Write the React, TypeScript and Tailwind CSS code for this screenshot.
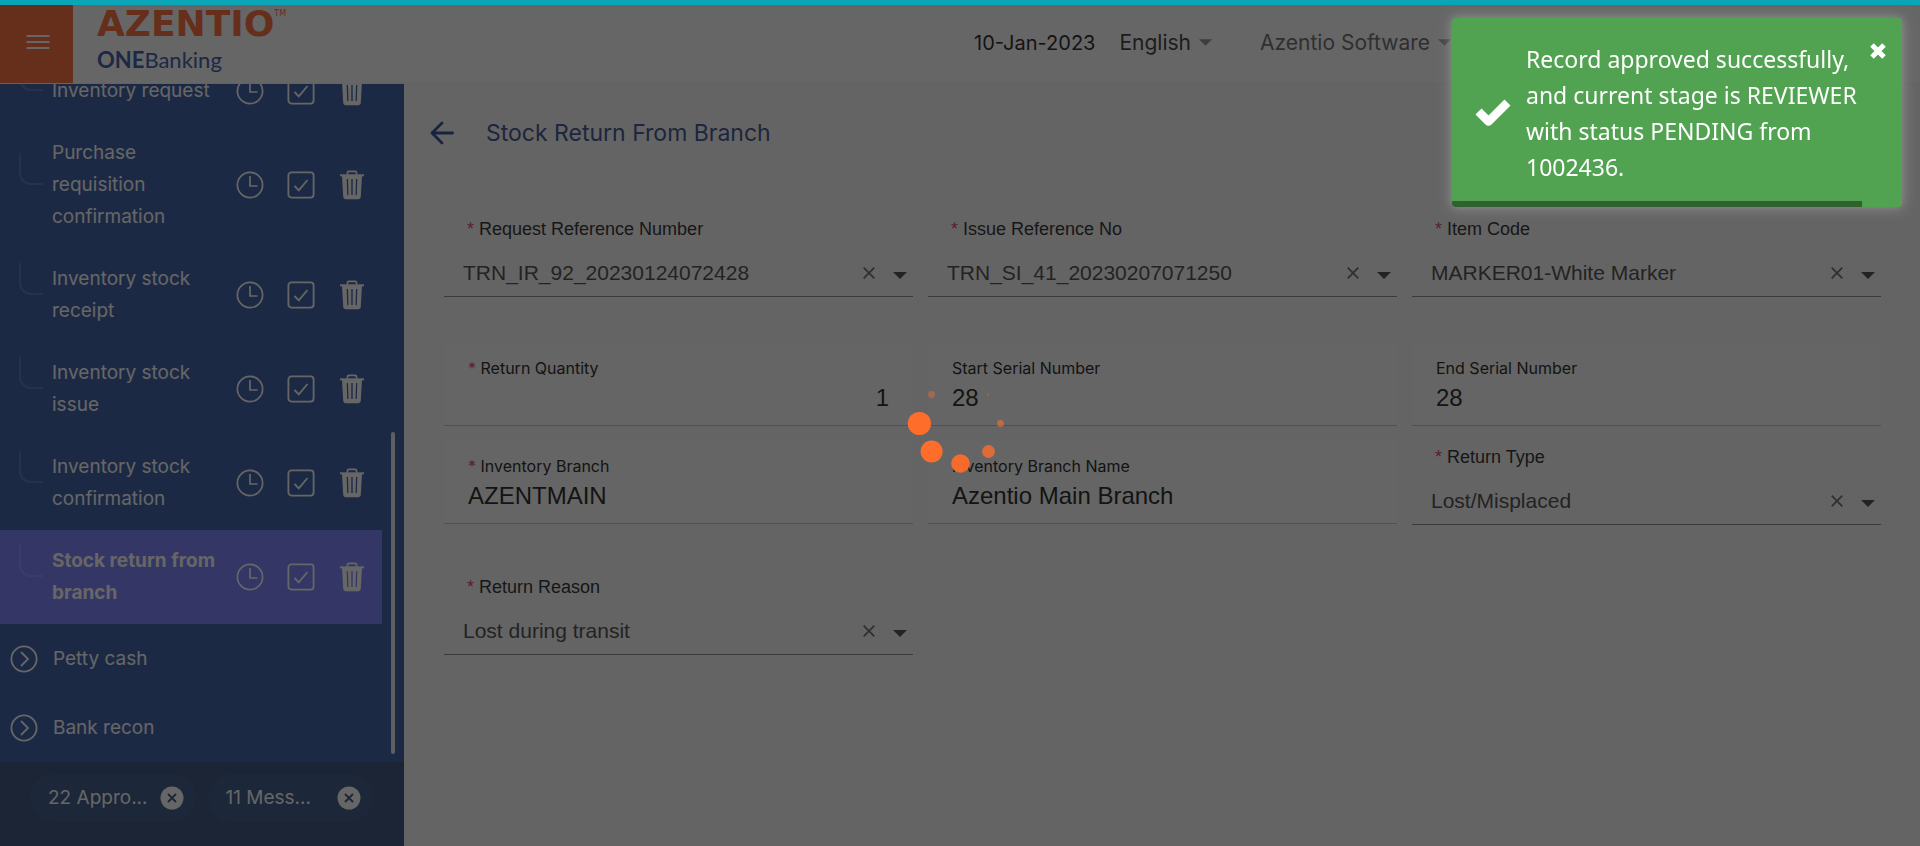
import type { ReactNode } from "react";

const MENU = [
  { label: "Inventory request" },
  { label: "Purchase requisition confirmation" },
  { label: "Inventory stock receipt" },
  { label: "Inventory stock issue" },
  { label: "Inventory stock confirmation" },
  { label: "Stock return from branch", active: true },
];

const GROUPS = ["Petty cash", "Bank recon"];

function ClockIcon() {
  return (
    <svg viewBox="0 0 28 28" className="size-7" fill="none" stroke="currentColor" strokeWidth="1.7">
      <circle cx="14" cy="14" r="12.6" />
      <path d="M14 5v10h7.500" />
    </svg>
  );
}

function CheckIcon() {
  return (
    <svg viewBox="0 0 28 28" className="size-7" fill="none" stroke="currentColor" strokeWidth="1.8">
      <rect x="1.400" y="1.400" width="25.200" height="25.200" rx="3" />
      <path d="M7.500 15l4.300 4.300L20.500 9" />
    </svg>
  );
}

function TrashIcon() {
  return (
    <svg viewBox="0 0 28 30" className="h-[30px] w-7" fill="none" stroke="currentColor">
      <path d="M9.500 4.500V2.600q0-1.300 1.300-1.300h6.400q1.300 0 1.300 1.300v1.900" strokeWidth="1.700" />
      <path d="M2 5.300h24" strokeWidth="2" />
      <path
        d="M4 5.500h20l-1.200 21q-.2 2.700-2.800 2.700H8q-2.600 0-2.800-2.700z M8.700 9l.5 16h1.300L10 9z M13.300 9v16h1.400V9z M18 9l-.5 16h1.300l.5-16z"
        fill="currentColor"
        fillRule="evenodd"
        stroke="none"
      />
    </svg>
  );
}

function ChevronCircle() {
  return (
    <svg viewBox="0 0 28 28" className="size-7" fill="none" stroke="currentColor" strokeWidth="1.8">
      <circle cx="14" cy="14" r="12.600" />
      <path d="M11 7l7 7-7 7" />
    </svg>
  );
}

function Caret({ className }: { className: string }) {
  return (
    <svg viewBox="0 0 14 7" className={className} fill="currentColor" aria-hidden="true">
      <path d="M0 0h14L7 7z" />
    </svg>
  );
}

function MenuItem({ label, active }: { label: string; active?: boolean }) {
  return (
    <li
      className={
        active
          ? "mr-[22px] flex items-center bg-[#8287ff] py-[15px] pl-[19px] pr-4 font-bold"
          : "mr-[22px] flex items-center py-[15px] pl-[19px] pr-4"
      }
    >
      <span className="-mt-8 h-8 w-6 shrink-0 rounded-bl-xl border-b-2 border-l-2 border-white/15" />
      <a href="#" className="ml-[9px] w-[176px] shrink-0">
        {label}
      </a>
      <span className="ml-auto flex items-center gap-[23px]">
        <button type="button" aria-label="History"><ClockIcon /></button>
        <button type="button" aria-label="Approve"><CheckIcon /></button>
        <button type="button" aria-label="Delete"><TrashIcon /></button>
      </span>
    </li>
  );
}

function Chip({ children }: { children: ReactNode }) {
  return (
    <div className="flex h-12 flex-1 items-center justify-between rounded-full bg-[#476290] pl-[18px] pr-3">
      <span>{children}</span>
      <button type="button" aria-label="Dismiss">
        <svg viewBox="0 0 24 24" className="size-6">
          <circle cx="12" cy="12" r="11.500" fill="white" />
          <path d="M8 8l8 8M16 8l-8 8" stroke="#485c87" strokeWidth="1.800" />
        </svg>
      </button>
    </div>
  );
}

function Star() {
  return <span className="text-[#e0526a]">* </span>;
}

function SelectField({ id, label, value }: { id: string; label: string; value: string }) {
  return (
    <div className="flex h-[84px] flex-col border-b border-[#949494] font-['Liberation_Sans',sans-serif]">
      <label htmlFor={id} className="ml-[23px] mt-1 text-lg leading-6 text-[#3a3a3a]">
        <Star />
        {label}
      </label>
      <div className="mt-4 flex items-center pl-[19px] pr-[6px] text-[#595959]">
        <select id={id} className="min-w-0 flex-1 appearance-none bg-transparent text-[21px] leading-8 outline-none">
          <option>{value}</option>
        </select>
        <button type="button" aria-label={`Clear ${label}`} className="mr-[18px] text-[#777]">
          <svg viewBox="0 0 12 12" className="size-3" stroke="currentColor" strokeWidth="1.800">
            <path d="M.7.7l10.600 10.600M11.300.7L.7 11.300" />
          </svg>
        </button>
        <Caret className="mt-1 h-[7px] w-[14px]" />
      </div>
    </div>
  );
}

function InputField({
  id,
  label,
  value,
  required,
  right,
}: {
  id: string;
  label: string;
  value: string;
  required?: boolean;
  right?: boolean;
}) {
  return (
    <div className="flex h-[83px] flex-col border-b border-[#c8c8c8] bg-[#fdfdfd] px-6 pt-[13px] text-[#333]">
      <label htmlFor={id} className="text-base leading-6">
        {required && <Star />}
        {label}
      </label>
      <input
        id={id}
        defaultValue={value}
        className={
          right
            ? "mt-0.5 w-full bg-transparent text-right font-['Liberation_Sans',sans-serif] text-2xl leading-8 outline-none"
            : "mt-0.5 w-full bg-transparent font-['Liberation_Sans',sans-serif] text-2xl leading-8 outline-none"
        }
      />
    </div>
  );
}

export default function App() {
  return (
    <div className="flex h-screen flex-col overflow-hidden bg-[#fbfbfb] font-[Inter,sans-serif]">
      <header className="flex h-[84px] shrink-0 items-stretch border-b border-[#f4f4f4] bg-white">
        <button type="button" aria-label="Menu" className="flex w-[73px] items-center justify-center bg-[#fc7546] pl-0.5 text-white">
          <svg viewBox="0 0 24 18" className="h-[18px] w-6" stroke="currentColor" strokeWidth="2">
            <path d="M.5 3h23M.5 9h23M.5 15h23" />
          </svg>
        </button>
        <div className="flex flex-col pl-6 pt-2">
          <div className="flex items-start font-['DejaVu_Sans',sans-serif] text-4xl font-bold leading-8 text-[#fd7546]">
            AZENTIO<span className="text-[8px] font-normal leading-3">TM</span>
          </div>
          <div className="mt-1 font-[Lato,sans-serif] text-[22px] leading-8 text-[#4866ac]">
            <span className="font-bold">ONE</span>Banking
          </div>
        </div>
        <div className="ml-auto flex items-center pr-[469px] pt-0.5 text-xl text-[#595959]">
          <span className="text-[#333]">10-Jan-2023</span>
          <button type="button" className="ml-6 flex items-center gap-2 text-[21px] text-[#4a4a4a]">
            English <Caret className="h-[7px] w-[13px] text-[#999]" />
          </button>
          <button type="button" className="ml-12 flex items-center gap-2 text-[21px] text-[#777]">
            Azentio Software <Caret className="h-[7px] w-[13px] text-[#aaa]" />
          </button>
        </div>
      </header>

      <div className="flex min-h-0 flex-1">
        <aside className="flex w-[404px] shrink-0 flex-col bg-[#4867ac] text-[19px] leading-8 text-white">
          <nav className="relative flex min-h-0 flex-1 flex-col justify-end overflow-hidden">
            <ul>
              {MENU.map((m) => (
                <MenuItem key={m.label} {...m} />
              ))}
              {GROUPS.map((g) => (
                <li key={g} className="flex h-[69px] items-center gap-[15px] pl-[10px]">
                  <ChevronCircle />
                  <a href="#">{g}</a>
                </li>
              ))}
            </ul>
            <span className="absolute bottom-2 right-[9px] h-[322px] w-1 rounded bg-[#eee]" />
          </nav>
          <div className="flex h-[84px] gap-3 bg-[#485c87] pl-[30px] pr-[31px] pt-3 leading-[48px]">
            <Chip>22 Appro...</Chip>
            <Chip>11 Mess...</Chip>
          </div>
        </aside>

        <main className="min-w-0 flex-1 pl-10 pr-[39px]">
          <div className="-ml-[14px] flex items-center gap-8 pt-[31px] text-[#3f58a0]">
            <button type="button" aria-label="Back">
              <svg viewBox="0 0 24 24" className="size-6" fill="none" stroke="currentColor" strokeWidth="2.800" strokeLinecap="round" strokeLinejoin="round">
                <path d="M22.500 12H2M12 2L2 12l10 10" />
              </svg>
            </button>
            <h1 className="text-[23px] leading-9 text-[#4a5f96]">Stock Return From Branch</h1>
          </div>
          <form className="mt-[62px]">
            <div className="grid grid-cols-3 gap-x-[15px]">
              <SelectField id="request-ref" label="Request Reference Number" value="TRN_IR_92_20230124072428" />
              <SelectField id="issue-ref" label="Issue Reference No" value="TRN_SI_41_20230207071250" />
              <SelectField id="item-code" label="Item Code" value="MARKER01-White Marker" />
            </div>
            <div className="my-[46px] grid grid-cols-3 gap-[15px]">
              <InputField id="qty" label="Return Quantity" value="1" required right />
              <InputField id="start-serial" label="Start Serial Number" value="28" />
              <InputField id="end-serial" label="End Serial Number" value="28" />
              <InputField id="branch" label="Inventory Branch" value="AZENTMAIN" required />
              <InputField id="branch-name" label="Inventory Branch Name" value="Azentio Main Branch" />
              <SelectField id="return-type" label="Return Type" value="Lost/Misplaced" />
            </div>
            <div className="grid grid-cols-3 gap-x-[15px]">
              <SelectField id="reason" label="Return Reason" value="Lost during transit" />
            </div>
          </form>
        </main>
      </div>

      <div className="fixed inset-0 flex items-center justify-center bg-black/60">
        <svg viewBox="-60 -60 120 120" className="size-[120px]" fill="#ff6d2a" role="img" aria-label="Loading">
          <circle cx="-40.600" cy="0.500" r="11.600" />
          <circle cx="-28.400" cy="28.500" r="11" />
          <circle cx="0.500" cy="40.500" r="9.300" opacity="0.950" />
          <circle cx="28.500" cy="28.500" r="6.400" opacity="0.800" />
          <circle cx="40.500" cy="0.500" r="3.400" opacity="0.600" />
          <circle cx="28" cy="-28.500" r="1" opacity="0.400" />
          <circle cx="-28.500" cy="-28.500" r="3.400" opacity="0.400" />
        </svg>
      </div>
      <div className="fixed inset-x-0 top-0 h-[5px] bg-[#0ba5b8]" />

      <div
        role="status"
        className="fixed right-[18px] top-[18px] w-[450px] overflow-hidden rounded bg-[#51a351] font-['Noto_Sans',sans-serif] text-white shadow-[0_0_12px_#999]"
      >
        <div className="flex items-center pb-[22px] pl-[22px] pt-[23px]">
          <svg viewBox="0 0 38 30" className="h-[30px] w-[38px] shrink-0" fill="none" stroke="currentColor" strokeWidth="8.500" strokeLinejoin="round">
            <path d="M4.500 13.500L14.500 23.500L33.500 4.500" />
          </svg>
          <p className="ml-[14px] w-[336px] text-[23px] leading-9">
            Record approved successfully, and current stage is REVIEWER with status PENDING from 1002436.
          </p>
        </div>
        <button type="button" aria-label="Close" className="absolute right-4 top-6">
          <svg viewBox="0 0 16 18" className="h-[18px] w-4" stroke="currentColor" strokeWidth="5">
            <path d="M2 3l12 12M14 3L2 15" />
          </svg>
        </button>
        <div className="absolute bottom-0 left-0 h-[6px] w-[91%] bg-black/40" />
      </div>
    </div>
  );
}
